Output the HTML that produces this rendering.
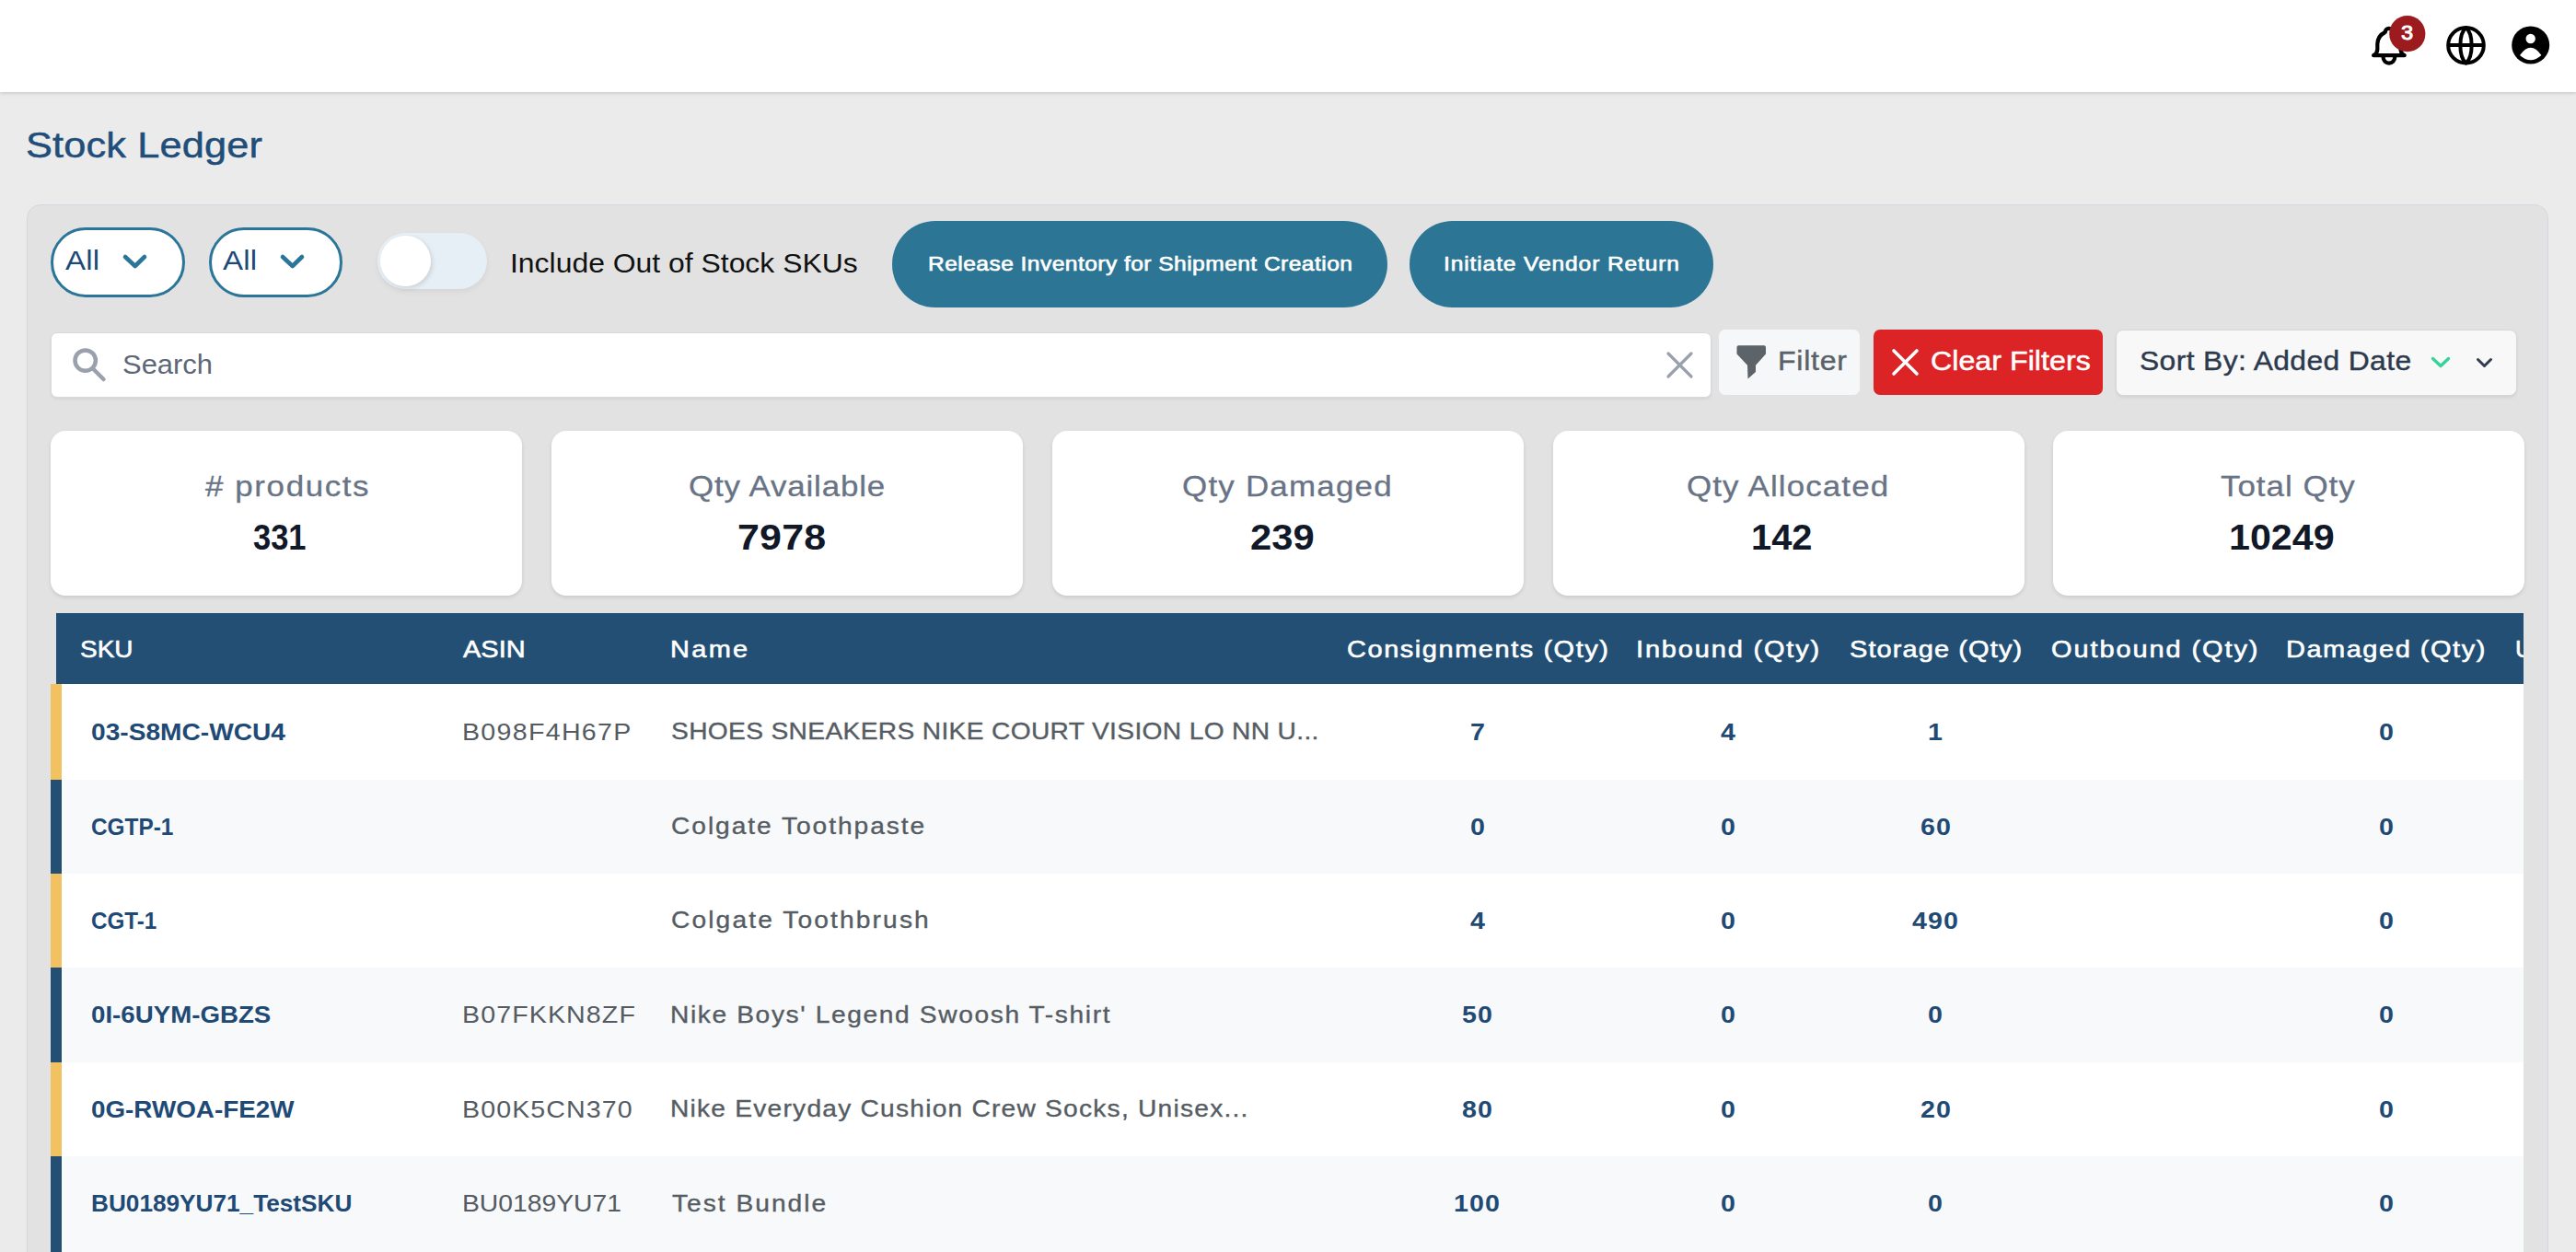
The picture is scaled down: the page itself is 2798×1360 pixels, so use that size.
<!DOCTYPE html>
<html><head><meta charset="utf-8"><title>Stock Ledger</title>
<style>
html,body{margin:0;padding:0;}
body{width:2798px;height:1360px;overflow:hidden;background:#ebebeb;position:relative;font-family:"Liberation Sans",sans-serif;}
.box{position:absolute;}
.t{position:absolute;white-space:nowrap;}
</style></head><body>
<div class="box" style="left:0;top:0;width:2798px;height:100px;background:#fff;box-shadow:0 1px 4px rgba(0,0,0,0.18);z-index:2"></div>
<svg class="box" style="left:2560px;top:10px;z-index:3" width="238" height="80" viewBox="2560 10 238 80">
 <g fill="none" stroke="#000" stroke-width="4" stroke-linecap="round" stroke-linejoin="round">
  <g transform="translate(2569.7 24.5) scale(2.1)" stroke-width="2"><path d="M10 5a2 2 0 1 1 4 0a7 7 0 0 1 4 6v3a4 4 0 0 0 2 3h-16a4 4 0 0 0 2 -3v-3a7 7 0 0 1 4 -6"/><path d="M9 17v1a3 3 0 0 0 6 0v-1"/></g>
  <circle cx="2678.5" cy="49.3" r="19.3"/>
  <path d="M2678.5 30 C2670.3 37 2670.3 61.6 2678.5 68.6 C2686.7 61.6 2686.7 37 2678.5 30 Z"/>
  <line x1="2660" y1="49" x2="2697" y2="49"/>
 </g>
 <circle cx="2614.8" cy="36.7" r="19.6" fill="#9b1b1f"/>
 <circle cx="2748.7" cy="49" r="20.5" fill="#000"/>
 <circle cx="2748.7" cy="42" r="5.2" fill="#fff"/>
 <path d="M2737 60 Q2748.7 43.5 2760.4 60 Q2748.7 70.5 2737 60 Z" fill="#fff"/>
</svg>
<div class="t" style="left:2607.67px;top:25.62px;font-size:21.48px;line-height:21.48px;letter-spacing:0.000px;font-weight:normal;color:#fff;z-index:4;-webkit-text-stroke:0.90px #fff;transform:scaleX(1.1000);transform-origin:0 0;">3</div>
<div class="t" style="left:28.05px;top:137.56px;font-size:39.39px;line-height:39.39px;letter-spacing:0.139px;font-weight:normal;color:#1f4e7a;-webkit-text-stroke:0.50px #1f4e7a;transform:scaleX(1.1000);transform-origin:0 0;">Stock Ledger</div>
<div class="box" style="left:29px;top:222px;width:2737px;height:1200px;background:#e2e2e2;border:1px solid #d3d8e0;border-radius:15px"></div>
<div class="box" style="left:55px;top:247px;width:146px;height:76px;box-sizing:border-box;background:#fff;border:3px solid #2b7698;border-radius:38px"></div>
<div class="t" style="left:71.00px;top:268.23px;font-size:30.09px;line-height:30.09px;letter-spacing:0.189px;font-weight:normal;color:#1c4a78;transform:scaleX(1.1000);transform-origin:0 0;">All</div>
<svg class="box" style="left:130.0px;top:272px" width="34" height="26" viewBox="0 0 34 26"><path d="M6 7 L16.7 17 L27 7" fill="none" stroke="#2b7698" stroke-width="4.6" stroke-linecap="round" stroke-linejoin="round"/></svg>
<div class="box" style="left:227px;top:247px;width:145px;height:76px;box-sizing:border-box;background:#fff;border:3px solid #2b7698;border-radius:38px"></div>
<div class="t" style="left:242.00px;top:268.23px;font-size:30.09px;line-height:30.09px;letter-spacing:0.189px;font-weight:normal;color:#1c4a78;transform:scaleX(1.1000);transform-origin:0 0;">All</div>
<svg class="box" style="left:300.8px;top:272px" width="34" height="26" viewBox="0 0 34 26"><path d="M6 7 L16.7 17 L27 7" fill="none" stroke="#2b7698" stroke-width="4.6" stroke-linecap="round" stroke-linejoin="round"/></svg>
<div class="box" style="left:410px;top:253px;width:119px;height:61px;background:#e7eff6;border-radius:31px;box-shadow:0 3px 6px rgba(0,0,0,0.06)"></div>
<div class="box" style="left:413px;top:256px;width:55px;height:55px;background:#fff;border-radius:50%;box-shadow:2px 2px 5px rgba(0,0,0,0.12)"></div>
<div class="t" style="left:554.23px;top:271.21px;font-size:30.23px;line-height:30.23px;letter-spacing:0.000px;font-weight:normal;color:#111;transform:scaleX(1.0557);transform-origin:0 0;">Include Out of Stock SKUs</div>
<div class="box" style="left:969px;top:240px;width:538px;height:94px;background:#2d7595;border-radius:47px"></div>
<div class="t" style="left:1007.93px;top:275.98px;font-size:22.35px;line-height:22.35px;letter-spacing:0.405px;font-weight:normal;color:#fff;-webkit-text-stroke:0.65px #fff;transform:scaleX(1.1000);transform-origin:0 0;">Release Inventory for Shipment Creation</div>
<div class="box" style="left:1531px;top:240px;width:330px;height:94px;background:#2d7595;border-radius:47px"></div>
<div class="t" style="left:1568.39px;top:275.98px;font-size:22.35px;line-height:22.35px;letter-spacing:0.792px;font-weight:normal;color:#fff;-webkit-text-stroke:0.65px #fff;transform:scaleX(1.1000);transform-origin:0 0;">Initiate Vendor Return</div>
<div class="box" style="left:55px;top:361px;width:1804px;height:71px;box-sizing:border-box;background:#fff;border:1px solid #d5dae1;border-radius:7px;box-shadow:0 2px 3px rgba(0,0,0,0.06)"></div>
<svg class="box" style="left:70px;top:370px" width="60" height="55" viewBox="70 370 60 55"><g fill="none" stroke="#9aa1ad" stroke-width="4.5" stroke-linecap="round"><circle cx="92.7" cy="391.6" r="11.2"/><line x1="101" y1="400.5" x2="112.5" y2="412"/></g></svg>
<div class="t" style="left:133.11px;top:380.82px;font-size:29.51px;line-height:29.51px;letter-spacing:0.000px;font-weight:normal;color:#5d6777;transform:scaleX(1.0489);transform-origin:0 0;">Search</div>
<svg class="box" style="left:1800px;top:372px" width="50" height="50" viewBox="1800 372 50 50"><g stroke="#9aa1ad" stroke-width="3.2" stroke-linecap="round"><line x1="1812" y1="384" x2="1837" y2="409"/><line x1="1837" y1="384" x2="1812" y2="409"/></g></svg>
<div class="box" style="left:1867px;top:358px;width:153px;height:71px;background:#f6f7f8;border-radius:7px"></div>
<svg class="box" style="left:1880px;top:370px" width="45" height="48" viewBox="1880 370 45 48"><path d="M1888.5 375.2 L1916 375.2 Q1918 375.2 1918 377.2 L1918 384.5 L1907 396.7 L1907 404 L1898.5 411.5 L1898 396.7 L1886.5 384.5 L1886.5 377.2 Q1886.5 375.2 1888.5 375.2 Z" fill="#5c6369"/></svg>
<div class="t" style="left:1931.43px;top:378.09px;font-size:29.19px;line-height:29.19px;letter-spacing:0.658px;font-weight:normal;color:#5a6269;-webkit-text-stroke:0.40px #5a6269;transform:scaleX(1.1000);transform-origin:0 0;">Filter</div>
<div class="box" style="left:2035px;top:358px;width:249px;height:71px;background:#dc2326;border-radius:7px"></div>
<svg class="box" style="left:2045px;top:370px" width="50" height="50" viewBox="2045 370 50 50"><g stroke="#fff" stroke-width="3.6" stroke-linecap="round"><line x1="2057" y1="381" x2="2082" y2="406"/><line x1="2082" y1="381" x2="2057" y2="406"/></g></svg>
<div class="t" style="left:2097.39px;top:378.07px;font-size:29.22px;line-height:29.22px;letter-spacing:0.039px;font-weight:normal;color:#fff;-webkit-text-stroke:0.50px #fff;transform:scaleX(1.1000);transform-origin:0 0;">Clear Filters</div>
<div class="box" style="left:2298px;top:358px;width:436px;height:71.5px;box-sizing:border-box;background:#f8f8f9;border:1px solid #d3d8df;border-radius:8px;box-shadow:0 2px 3px rgba(0,0,0,0.07)"></div>
<div class="t" style="left:2324.17px;top:378.34px;font-size:28.90px;line-height:28.90px;letter-spacing:0.360px;font-weight:normal;color:#2d3a4d;-webkit-text-stroke:0.40px #2d3a4d;transform:scaleX(1.1000);transform-origin:0 0;">Sort By: Added Date</div>
<svg class="box" style="left:2630px;top:378px" width="90" height="30" viewBox="2630 378 90 30"><path d="M2642.5 389.5 L2651 397.5 L2659.5 389.5" fill="none" stroke="#34d399" stroke-width="3.4" stroke-linecap="round" stroke-linejoin="round"/><path d="M2691.5 390.5 L2698.5 397.5 L2705.5 390.5" fill="none" stroke="#2f3d4f" stroke-width="3" stroke-linecap="round" stroke-linejoin="round"/></svg>
<div class="box" style="left:55px;top:468px;width:512px;height:179px;background:#fff;border-radius:16px;box-shadow:0 2px 4px rgba(0,0,0,0.11)"></div>
<div class="t" style="left:223.03px;top:512.80px;font-size:31.77px;line-height:31.77px;letter-spacing:1.452px;font-weight:normal;color:#687385;-webkit-text-stroke:0.30px #687385;transform:scaleX(1.1000);transform-origin:0 0;"># products</div>
<div class="t" style="left:275.41px;top:563.70px;font-size:39.10px;line-height:39.10px;letter-spacing:0.000px;font-weight:bold;color:#111827;transform:scaleX(0.8825);transform-origin:0 0;">331</div>
<div class="box" style="left:599px;top:468px;width:512px;height:179px;background:#fff;border-radius:16px;box-shadow:0 2px 4px rgba(0,0,0,0.11)"></div>
<div class="t" style="left:748.28px;top:512.80px;font-size:31.77px;line-height:31.77px;letter-spacing:0.749px;font-weight:normal;color:#687385;-webkit-text-stroke:0.30px #687385;transform:scaleX(1.1000);transform-origin:0 0;">Qty Available</div>
<div class="t" style="left:800.78px;top:563.70px;font-size:39.10px;line-height:39.10px;letter-spacing:0.156px;font-weight:bold;color:#111827;transform:scaleX(1.1000);transform-origin:0 0;">7978</div>
<div class="box" style="left:1143px;top:468px;width:512px;height:179px;background:#fff;border-radius:16px;box-shadow:0 2px 4px rgba(0,0,0,0.11)"></div>
<div class="t" style="left:1284.03px;top:512.80px;font-size:31.77px;line-height:31.77px;letter-spacing:1.102px;font-weight:normal;color:#687385;-webkit-text-stroke:0.30px #687385;transform:scaleX(1.1000);transform-origin:0 0;">Qty Damaged</div>
<div class="t" style="left:1357.84px;top:563.70px;font-size:39.10px;line-height:39.10px;letter-spacing:0.000px;font-weight:bold;color:#111827;transform:scaleX(1.0679);transform-origin:0 0;">239</div>
<div class="box" style="left:1687px;top:468px;width:512px;height:179px;background:#fff;border-radius:16px;box-shadow:0 2px 4px rgba(0,0,0,0.11)"></div>
<div class="t" style="left:1832.23px;top:512.80px;font-size:31.77px;line-height:31.77px;letter-spacing:1.001px;font-weight:normal;color:#687385;-webkit-text-stroke:0.30px #687385;transform:scaleX(1.1000);transform-origin:0 0;">Qty Allocated</div>
<div class="t" style="left:1902.41px;top:563.70px;font-size:39.10px;line-height:39.10px;letter-spacing:0.000px;font-weight:bold;color:#111827;transform:scaleX(1.0181);transform-origin:0 0;">142</div>
<div class="box" style="left:2230px;top:468px;width:512px;height:179px;background:#fff;border-radius:16px;box-shadow:0 2px 4px rgba(0,0,0,0.11)"></div>
<div class="t" style="left:2412.30px;top:512.80px;font-size:31.77px;line-height:31.77px;letter-spacing:0.889px;font-weight:normal;color:#687385;-webkit-text-stroke:0.30px #687385;transform:scaleX(1.1000);transform-origin:0 0;">Total Qty</div>
<div class="t" style="left:2421.33px;top:563.70px;font-size:39.10px;line-height:39.10px;letter-spacing:-0.000px;font-weight:bold;color:#111827;transform:scaleX(1.0545);transform-origin:0 0;">10249</div>
<div class="box" style="left:61px;top:666px;width:2680px;height:77px;background:#234f75"></div>
<div class="t" style="left:86.54px;top:691.71px;font-size:26.34px;line-height:26.34px;letter-spacing:0.000px;font-weight:normal;color:#fff;-webkit-text-stroke:0.60px #fff;transform:scaleX(1.0616);transform-origin:0 0;">SKU</div>
<div class="t" style="left:502.50px;top:691.71px;font-size:26.34px;line-height:26.34px;letter-spacing:0.035px;font-weight:normal;color:#fff;-webkit-text-stroke:0.60px #fff;transform:scaleX(1.1000);transform-origin:0 0;">ASIN</div>
<div class="t" style="left:728.48px;top:691.71px;font-size:26.34px;line-height:26.34px;letter-spacing:2.112px;font-weight:normal;color:#fff;-webkit-text-stroke:0.60px #fff;transform:scaleX(1.1000);transform-origin:0 0;">Name</div>
<div class="t" style="left:1462.75px;top:691.71px;font-size:26.34px;line-height:26.34px;letter-spacing:1.414px;font-weight:normal;color:#fff;-webkit-text-stroke:0.60px #fff;transform:scaleX(1.1000);transform-origin:0 0;">Consignments (Qty)</div>
<div class="t" style="left:1777.39px;top:691.71px;font-size:26.34px;line-height:26.34px;letter-spacing:1.677px;font-weight:normal;color:#fff;-webkit-text-stroke:0.60px #fff;transform:scaleX(1.1000);transform-origin:0 0;">Inbound (Qty)</div>
<div class="t" style="left:2008.60px;top:691.71px;font-size:26.34px;line-height:26.34px;letter-spacing:1.009px;font-weight:normal;color:#fff;-webkit-text-stroke:0.60px #fff;transform:scaleX(1.1000);transform-origin:0 0;">Storage (Qty)</div>
<div class="t" style="left:2228.30px;top:691.71px;font-size:26.34px;line-height:26.34px;letter-spacing:1.737px;font-weight:normal;color:#fff;-webkit-text-stroke:0.60px #fff;transform:scaleX(1.1000);transform-origin:0 0;">Outbound (Qty)</div>
<div class="t" style="left:2483.38px;top:691.71px;font-size:26.34px;line-height:26.34px;letter-spacing:1.389px;font-weight:normal;color:#fff;-webkit-text-stroke:0.60px #fff;transform:scaleX(1.1000);transform-origin:0 0;">Damaged (Qty)</div>
<div class="box" style="left:2700px;top:666px;width:41px;height:77px;overflow:hidden"><div class="t" style="left:32.02px;top:25.71px;font-size:26.34px;line-height:26.34px;letter-spacing:0.000px;font-weight:normal;color:#fff;-webkit-text-stroke:0.60px #fff;">U</div></div>
<div class="box" style="left:55px;top:1359.02px;width:2686px;height:10px;background:#fff"></div>
<div class="box" style="left:55px;top:1359.02px;width:12px;height:10px;background:#f2c261"></div>
<div class="box" style="left:55px;top:743.00px;width:2686px;height:104.20px;background:#ffffff"></div>
<div class="box" style="left:55px;top:743.00px;width:12px;height:104.20px;background:#f2c261"></div>
<div class="t" style="left:99.17px;top:781.63px;font-size:26.02px;line-height:26.02px;letter-spacing:0.000px;font-weight:bold;color:#1f4a75;transform:scaleX(1.0812);transform-origin:0 0;">03-S8MC-WCU4</div>
<div class="t" style="left:502.21px;top:781.63px;font-size:26.02px;line-height:26.02px;letter-spacing:1.162px;font-weight:normal;color:#545b62;transform:scaleX(1.1000);transform-origin:0 0;">B098F4H67P</div>
<div class="t" style="left:729.03px;top:781.97px;font-size:25.61px;line-height:25.61px;letter-spacing:0.306px;font-weight:normal;color:#555c63;-webkit-text-stroke:0.35px #555c63;transform:scaleX(1.1000);transform-origin:0 0;">SHOES SNEAKERS NIKE COURT VISION LO NN U...</div>
<div class="t" style="left:1596.66px;top:781.63px;font-size:26.02px;line-height:26.02px;letter-spacing:1.000px;font-weight:bold;color:#1f4a75;transform:scaleX(1.1000);transform-origin:0 0;">7</div>
<div class="t" style="left:1869.32px;top:781.63px;font-size:26.02px;line-height:26.02px;letter-spacing:1.000px;font-weight:bold;color:#1f4a75;transform:scaleX(1.1000);transform-origin:0 0;">4</div>
<div class="t" style="left:2093.56px;top:781.63px;font-size:26.02px;line-height:26.02px;letter-spacing:1.000px;font-weight:bold;color:#1f4a75;transform:scaleX(1.1000);transform-origin:0 0;">1</div>
<div class="t" style="left:2583.96px;top:781.63px;font-size:26.02px;line-height:26.02px;letter-spacing:1.000px;font-weight:bold;color:#1f4a75;transform:scaleX(1.1000);transform-origin:0 0;">0</div>
<div class="box" style="left:55px;top:846.70px;width:2686px;height:102.80px;background:#f8f9fa"></div>
<div class="box" style="left:55px;top:846.70px;width:12px;height:102.80px;background:#234f75"></div>
<div class="t" style="left:99.33px;top:884.63px;font-size:26.02px;line-height:26.02px;letter-spacing:0.000px;font-weight:bold;color:#1f4a75;transform:scaleX(0.9363);transform-origin:0 0;">CGTP-1</div>
<div class="t" style="left:728.89px;top:884.97px;font-size:25.61px;line-height:25.61px;letter-spacing:1.763px;font-weight:normal;color:#555c63;-webkit-text-stroke:0.35px #555c63;transform:scaleX(1.1000);transform-origin:0 0;">Colgate Toothpaste</div>
<div class="t" style="left:1596.66px;top:884.63px;font-size:26.02px;line-height:26.02px;letter-spacing:1.000px;font-weight:bold;color:#1f4a75;transform:scaleX(1.1000);transform-origin:0 0;">0</div>
<div class="t" style="left:1869.46px;top:884.63px;font-size:26.02px;line-height:26.02px;letter-spacing:1.000px;font-weight:bold;color:#1f4a75;transform:scaleX(1.1000);transform-origin:0 0;">0</div>
<div class="t" style="left:2085.64px;top:884.63px;font-size:26.02px;line-height:26.02px;letter-spacing:1.000px;font-weight:bold;color:#1f4a75;transform:scaleX(1.1000);transform-origin:0 0;">60</div>
<div class="t" style="left:2583.96px;top:884.63px;font-size:26.02px;line-height:26.02px;letter-spacing:1.000px;font-weight:bold;color:#1f4a75;transform:scaleX(1.1000);transform-origin:0 0;">0</div>
<div class="box" style="left:55px;top:949.00px;width:2686px;height:102.70px;background:#ffffff"></div>
<div class="box" style="left:55px;top:949.00px;width:12px;height:102.70px;background:#f2c261"></div>
<div class="t" style="left:99.33px;top:986.88px;font-size:26.02px;line-height:26.02px;letter-spacing:0.000px;font-weight:bold;color:#1f4a75;transform:scaleX(0.9302);transform-origin:0 0;">CGT-1</div>
<div class="t" style="left:728.89px;top:987.22px;font-size:25.61px;line-height:25.61px;letter-spacing:1.924px;font-weight:normal;color:#555c63;-webkit-text-stroke:0.35px #555c63;transform:scaleX(1.1000);transform-origin:0 0;">Colgate Toothbrush</div>
<div class="t" style="left:1596.52px;top:986.88px;font-size:26.02px;line-height:26.02px;letter-spacing:1.000px;font-weight:bold;color:#1f4a75;transform:scaleX(1.1000);transform-origin:0 0;">4</div>
<div class="t" style="left:1869.46px;top:986.88px;font-size:26.02px;line-height:26.02px;letter-spacing:1.000px;font-weight:bold;color:#1f4a75;transform:scaleX(1.1000);transform-origin:0 0;">0</div>
<div class="t" style="left:2077.43px;top:986.88px;font-size:26.02px;line-height:26.02px;letter-spacing:1.000px;font-weight:bold;color:#1f4a75;transform:scaleX(1.1000);transform-origin:0 0;">490</div>
<div class="t" style="left:2583.96px;top:986.88px;font-size:26.02px;line-height:26.02px;letter-spacing:1.000px;font-weight:bold;color:#1f4a75;transform:scaleX(1.1000);transform-origin:0 0;">0</div>
<div class="box" style="left:55px;top:1051.20px;width:2686px;height:102.90px;background:#f8f9fa"></div>
<div class="box" style="left:55px;top:1051.20px;width:12px;height:102.90px;background:#234f75"></div>
<div class="t" style="left:99.19px;top:1089.18px;font-size:26.02px;line-height:26.02px;letter-spacing:0.000px;font-weight:bold;color:#1f4a75;transform:scaleX(1.0639);transform-origin:0 0;">0I-6UYM-GBZS</div>
<div class="t" style="left:502.21px;top:1089.18px;font-size:26.02px;line-height:26.02px;letter-spacing:0.988px;font-weight:normal;color:#545b62;transform:scaleX(1.1000);transform-origin:0 0;">B07FKKN8ZF</div>
<div class="t" style="left:728.05px;top:1089.52px;font-size:25.61px;line-height:25.61px;letter-spacing:1.462px;font-weight:normal;color:#555c63;-webkit-text-stroke:0.35px #555c63;transform:scaleX(1.1000);transform-origin:0 0;">Nike Boys&#39; Legend Swoosh T-shirt</div>
<div class="t" style="left:1588.31px;top:1089.18px;font-size:26.02px;line-height:26.02px;letter-spacing:1.000px;font-weight:bold;color:#1f4a75;transform:scaleX(1.1000);transform-origin:0 0;">50</div>
<div class="t" style="left:1869.46px;top:1089.18px;font-size:26.02px;line-height:26.02px;letter-spacing:1.000px;font-weight:bold;color:#1f4a75;transform:scaleX(1.1000);transform-origin:0 0;">0</div>
<div class="t" style="left:2094.06px;top:1089.18px;font-size:26.02px;line-height:26.02px;letter-spacing:1.000px;font-weight:bold;color:#1f4a75;transform:scaleX(1.1000);transform-origin:0 0;">0</div>
<div class="t" style="left:2583.96px;top:1089.18px;font-size:26.02px;line-height:26.02px;letter-spacing:1.000px;font-weight:bold;color:#1f4a75;transform:scaleX(1.1000);transform-origin:0 0;">0</div>
<div class="box" style="left:55px;top:1153.60px;width:2686px;height:102.90px;background:#ffffff"></div>
<div class="box" style="left:55px;top:1153.60px;width:12px;height:102.90px;background:#f2c261"></div>
<div class="t" style="left:99.19px;top:1191.58px;font-size:26.02px;line-height:26.02px;letter-spacing:0.000px;font-weight:bold;color:#1f4a75;transform:scaleX(1.0690);transform-origin:0 0;">0G-RWOA-FE2W</div>
<div class="t" style="left:502.21px;top:1191.58px;font-size:26.02px;line-height:26.02px;letter-spacing:0.988px;font-weight:normal;color:#545b62;transform:scaleX(1.1000);transform-origin:0 0;">B00K5CN370</div>
<div class="t" style="left:728.05px;top:1191.92px;font-size:25.61px;line-height:25.61px;letter-spacing:1.109px;font-weight:normal;color:#555c63;-webkit-text-stroke:0.35px #555c63;transform:scaleX(1.1000);transform-origin:0 0;">Nike Everyday Cushion Crew Socks, Unisex...</div>
<div class="t" style="left:1588.31px;top:1191.58px;font-size:26.02px;line-height:26.02px;letter-spacing:1.000px;font-weight:bold;color:#1f4a75;transform:scaleX(1.1000);transform-origin:0 0;">80</div>
<div class="t" style="left:1869.46px;top:1191.58px;font-size:26.02px;line-height:26.02px;letter-spacing:1.000px;font-weight:bold;color:#1f4a75;transform:scaleX(1.1000);transform-origin:0 0;">0</div>
<div class="t" style="left:2085.64px;top:1191.58px;font-size:26.02px;line-height:26.02px;letter-spacing:1.000px;font-weight:bold;color:#1f4a75;transform:scaleX(1.1000);transform-origin:0 0;">20</div>
<div class="t" style="left:2583.96px;top:1191.58px;font-size:26.02px;line-height:26.02px;letter-spacing:1.000px;font-weight:bold;color:#1f4a75;transform:scaleX(1.1000);transform-origin:0 0;">0</div>
<div class="box" style="left:55px;top:1256.00px;width:2686px;height:103.50px;background:#f8f9fa"></div>
<div class="box" style="left:55px;top:1256.00px;width:12px;height:103.50px;background:#234f75"></div>
<div class="t" style="left:98.60px;top:1294.28px;font-size:26.02px;line-height:26.02px;letter-spacing:0.000px;font-weight:bold;color:#1f4a75;transform:scaleX(1.0066);transform-origin:0 0;">BU0189YU71_TestSKU</div>
<div class="t" style="left:502.24px;top:1294.28px;font-size:26.02px;line-height:26.02px;letter-spacing:0.000px;font-weight:normal;color:#545b62;transform:scaleX(1.0876);transform-origin:0 0;">BU0189YU71</div>
<div class="t" style="left:729.74px;top:1294.62px;font-size:25.61px;line-height:25.61px;letter-spacing:1.809px;font-weight:normal;color:#555c63;-webkit-text-stroke:0.35px #555c63;transform:scaleX(1.1000);transform-origin:0 0;">Test Bundle</div>
<div class="t" style="left:1579.39px;top:1294.28px;font-size:26.02px;line-height:26.02px;letter-spacing:1.000px;font-weight:bold;color:#1f4a75;transform:scaleX(1.1000);transform-origin:0 0;">100</div>
<div class="t" style="left:1869.46px;top:1294.28px;font-size:26.02px;line-height:26.02px;letter-spacing:1.000px;font-weight:bold;color:#1f4a75;transform:scaleX(1.1000);transform-origin:0 0;">0</div>
<div class="t" style="left:2094.06px;top:1294.28px;font-size:26.02px;line-height:26.02px;letter-spacing:1.000px;font-weight:bold;color:#1f4a75;transform:scaleX(1.1000);transform-origin:0 0;">0</div>
<div class="t" style="left:2583.96px;top:1294.28px;font-size:26.02px;line-height:26.02px;letter-spacing:1.000px;font-weight:bold;color:#1f4a75;transform:scaleX(1.1000);transform-origin:0 0;">0</div>
</body></html>
